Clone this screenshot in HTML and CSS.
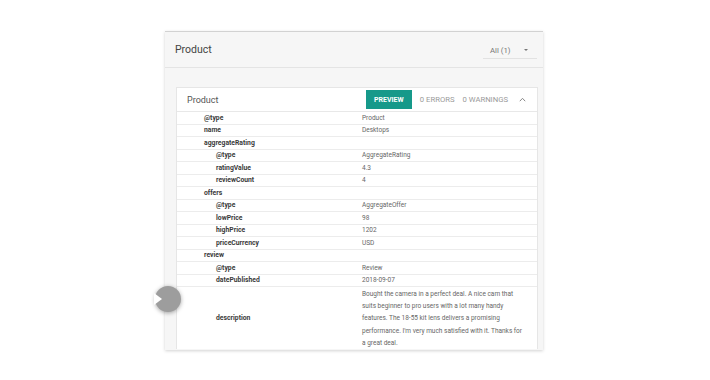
FILE: index.html
```html
<!DOCTYPE html>
<html>
<head>
<meta charset="utf-8">
<link rel="stylesheet" href="styles.css">
</head>
<body>
<div class="page">
  <div class="panel">
    <div class="panel-head">
      <div class="panel-title">Product</div>
      <div class="select"><span>All (1)</span><span class="caret"></span></div>
    </div>
    <div class="panel-body">
      <div class="card">
        <div class="card-head">
          <div class="card-title">Product</div>
          <div class="actions">
            <div class="btn">PREVIEW</div>
            <div class="stat">0 ERRORS</div>
            <div class="stat">0 WARNINGS</div>
            <svg class="chev" width="7" height="5" viewBox="0 0 7 5"><path d="M0.8 4.2 L3.5 1.3 L6.2 4.2" fill="none" stroke="#888" stroke-width="1"/></svg>
          </div>
        </div>
        <div class="rows">
          <div class="row"><div class="k l1">@type</div><div class="v">Product</div></div>
          <div class="row"><div class="k l1">name</div><div class="v">Desktops</div></div>
          <div class="row"><div class="k l1">aggregateRating</div><div class="v"></div></div>
          <div class="row"><div class="k l2">@type</div><div class="v">AggregateRating</div></div>
          <div class="row"><div class="k l2">ratingValue</div><div class="v">4.3</div></div>
          <div class="row"><div class="k l2">reviewCount</div><div class="v">4</div></div>
          <div class="row"><div class="k l1">offers</div><div class="v"></div></div>
          <div class="row"><div class="k l2">@type</div><div class="v">AggregateOffer</div></div>
          <div class="row"><div class="k l2">lowPrice</div><div class="v">98</div></div>
          <div class="row"><div class="k l2">highPrice</div><div class="v">1202</div></div>
          <div class="row"><div class="k l2">priceCurrency</div><div class="v">USD</div></div>
          <div class="row"><div class="k l1">review</div><div class="v"></div></div>
          <div class="row"><div class="k l2">@type</div><div class="v">Review</div></div>
          <div class="row"><div class="k l2">datePublished</div><div class="v">2018-09-07</div></div>
          <div class="row tall"><div class="k l2">description</div><div class="v desc">Bought the camera in a perfect deal. A nice cam that<br>suits beginner to pro users with a lot many handy<br>features. The 18-55 kit lens delivers a promising<br>performance. I'm very much satisfied with it. Thanks for<br>a great deal.</div></div>
        </div>
      </div>
    </div>
    <svg class="fab" width="36" height="36" viewBox="0 0 36 36"><circle class="fab-circle" cx="17" cy="17" r="13" fill="#9d9d9d"/><polygon points="3,11 11,17 3,23" fill="#fff"/></svg>
  </div>
</div>
</body>
</html>
```
FILE: styles.css
```css
html, body {
  margin: 0;
  padding: 0;
  background: #fff;
  font-family: Roboto, "Liberation Sans", Arial, sans-serif;
}
.page {
  width: 710px;
  height: 380px;
  padding-top: 31px;
  box-sizing: border-box;
  overflow: hidden;
}
.panel {
  position: relative;
  width: 378px;
  height: 319px;
  margin-left: 165px;
  background: #f6f6f6;
  border-top: 1px solid #d2d2d2;
  box-shadow: 0 1px 3px rgba(0,0,0,0.18);
  box-sizing: border-box;
}
.panel-head {
  height: 35px;
  border-bottom: 1px solid #e4e4e4;
  display: flex;
  align-items: center;
  justify-content: space-between;
  padding-left: 10px;
  padding-right: 6px;
}
.panel-title {
  font-size: 10.5px;
  color: #444;
}
.select {
  width: 54px;
  height: 18px;
  box-sizing: border-box;
  border-bottom: 1px solid #e2e2e2;
  display: flex;
  align-items: center;
  justify-content: space-between;
  padding: 2px 9px 0 7px;
  font-size: 7.8px;
  color: #777;
}
.caret {
  width: 0;
  height: 0;
  border-left: 2.5px solid transparent;
  border-right: 2.5px solid transparent;
  border-top: 2.5px solid #777;
}
.panel-body {
  padding: 19px 5px 0 11px;
}
.card {
  background: #fff;
  border: 1px solid #e6e6e6;
  border-bottom: 0;
  height: 262px;
  box-sizing: border-box;
  overflow: hidden;
}
.card-head {
  height: 24px;
  box-sizing: border-box;
  border-bottom: 1px solid #e8e8e8;
  display: flex;
  align-items: center;
  justify-content: space-between;
  padding: 0 11px 0 10px;
}
.card-title {
  font-size: 9px;
  color: #555;
  padding-top: 1px;
}
.actions {
  display: flex;
  align-items: center;
}
.btn {
  background: #16998a;
  color: #fff;
  font-weight: 700;
  font-size: 7px;
  height: 19px;
  width: 46px;
  display: flex;
  align-items: center;
  justify-content: center;
  margin-right: 8px;
}
.stat {
  font-size: 7.7px;
  color: #9a9a9a;
  margin-right: 8px;
}
.stat + .stat {
  margin-right: 11px;
}
.chev {
  display: block;
}
.row {
  display: grid;
  grid-template-columns: 185px 1fr;
  height: 12.5px;
  box-sizing: border-box;
  border-bottom: 1px solid #ececec;
  align-items: center;
}
.row.tall {
  height: auto;
  border-bottom: 0;
}
.k {
  font-size: 6.8px;
  font-weight: 700;
  color: #3a3a3a;
}
.l1 { padding-left: 27px; }
.l2 { padding-left: 39px; }
.v {
  font-size: 6.5px;
  color: #666;
}
.desc {
  line-height: 12.2px;
  white-space: nowrap;
  padding-top: 1px;
}
.fab {
  position: absolute;
  left: -14px;
  top: 250px;
}
.fab-circle {
  filter: drop-shadow(0 1px 2px rgba(0,0,0,0.35));
}
```
